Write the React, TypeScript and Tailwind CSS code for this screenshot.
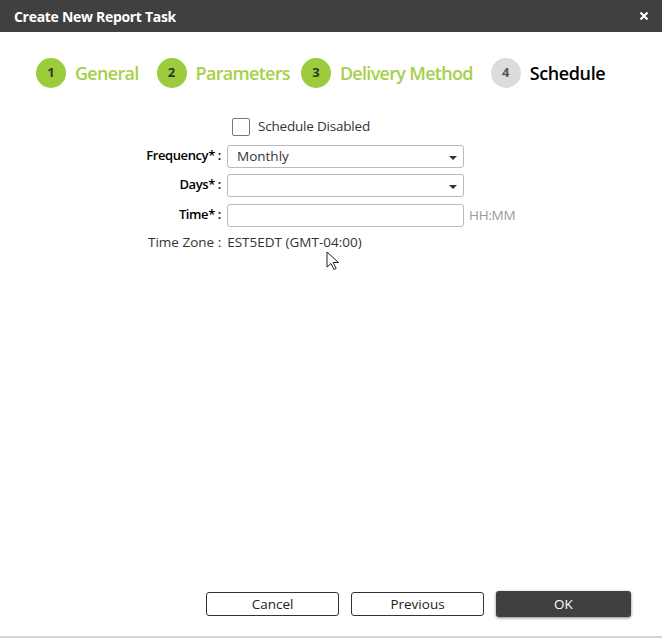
const steps = [
  { n: '1', label: 'General', done: true, gap: 'mr-[18px]' },
  { n: '2', label: 'Parameters', done: true, gap: 'mr-[11px]' },
  { n: '3', label: 'Delivery Method', done: true, gap: 'mr-[18px]' },
  { n: '4', label: 'Schedule', done: false, gap: '' },
]

function Caret() {
  return (
    <svg width="8" height="4" viewBox="0 0 8 4" className="absolute right-[6px] top-[10px]">
      <path d="M0 0h8L4 4z" fill="#333" />
    </svg>
  )
}

export default function App() {
  return (
    <div className="relative w-[662px] h-[640px] bg-white flex flex-col font-['Open_Sans',sans-serif] text-[#333]">
      <div className="h-8 bg-[#404040] flex items-center justify-between pl-[14px] pr-[13px]">
        <span className="text-white text-[14px] font-bold tracking-[-0.3px]">Create New Report Task</span>
        <svg width="10" height="10" viewBox="0 0 10 10">
          <path d="M1.5 1.5l7 7M8.5 1.5l-7 7" stroke="#fff" strokeWidth="2.2" />
        </svg>
      </div>

      <div className="flex items-center pl-[36px] mt-[26px] h-[30px]">
        {steps.map((s) => (
          <div key={s.n} className={`flex items-center ${s.gap}`}>
            <div
              className={
                s.done
                  ? 'w-[30px] h-[30px] rounded-full bg-[#9ccb3b] text-[#333] flex items-center justify-center text-[13px] font-bold'
                  : 'w-[30px] h-[30px] rounded-full bg-[#dcdcdc] text-[#555] flex items-center justify-center text-[13px] font-bold'
              }
            >
              {s.n}
            </div>
            <span
              className={
                s.done
                  ? 'ml-[9px] text-[18px] font-semibold text-[#a5d04a] tracking-[-0.7px]'
                  : 'ml-[9px] text-[18px] font-semibold text-black tracking-[-0.4px]'
              }
            >
              {s.label}
            </span>
          </div>
        ))}
      </div>

      <div className="flex flex-col mt-[29px] text-[13.5px]">
        <div className="flex items-center pl-[232px] h-[19px]">
          <div className="w-[18px] h-[18px] border border-[#777] rounded-[2px] bg-white" />
          <span className="ml-[8px] tracking-[-0.2px]">Schedule Disabled</span>
        </div>

        <div className="flex items-center mt-[9px] h-[22px]">
          <span className="w-[222px] text-right text-[13px] font-semibold text-black tracking-[-0.4px] pr-[1px]">Frequency* :</span>
          <div className="relative ml-[5px] w-[237px] h-[23px] border border-[#bbb] rounded-[3px] pl-[9px] flex items-center">
            Monthly
            <Caret />
          </div>
        </div>

        <div className="flex items-center mt-[7px] h-[22px]">
          <span className="w-[222px] text-right text-[13px] font-semibold text-black tracking-[-0.4px] pr-[1px]">Days* :</span>
          <div className="relative ml-[5px] w-[237px] h-[23px] border border-[#bbb] rounded-[3px]">
            <Caret />
          </div>
        </div>

        <div className="flex items-center mt-[8px] h-[22px]">
          <span className="w-[222px] text-right text-[13px] font-semibold text-black tracking-[-0.4px] pr-[1px]">Time* :</span>
          <div className="ml-[5px] w-[237px] h-[23px] border border-[#bbb] rounded-[3px]" />
          <span className="ml-[5px] text-[#999] tracking-[-0.3px]">HH:MM</span>
        </div>

        <div className="flex items-center mt-[5px] h-[22px] pl-[148px]">
          <span>Time Zone :</span>
          <span className="ml-[6px]">EST5EDT (GMT-04:00)</span>
        </div>
      </div>

      <div className="flex-1" />

      <div className="flex items-center justify-end pr-[31px] gap-[12px] text-[13.5px]">
        <button className="w-[133px] h-[24px] border border-[#333] rounded-[3px] bg-white text-[#222]">Cancel</button>
        <button className="w-[133px] h-[24px] border border-[#333] rounded-[3px] bg-white text-[#222]">Previous</button>
        <button className="w-[135px] h-[26px] rounded-[3px] bg-[#404040] text-white shadow-[0_1px_3px_rgba(0,0,0,0.5)]">OK</button>
      </div>

      <div className="mt-[19px] mb-[2px] h-[2px] bg-[#d4d4d4]" />

      <svg width="14" height="20" viewBox="0 0 14 20" className="absolute left-[326px] top-[251px]">
        <path d="M1 1v15l4-3.5 3 6 2.2-1-3-6H12.5z" fill="#fff" stroke="#222" strokeWidth="1" strokeLinejoin="round" />
      </svg>
    </div>
  )
}
